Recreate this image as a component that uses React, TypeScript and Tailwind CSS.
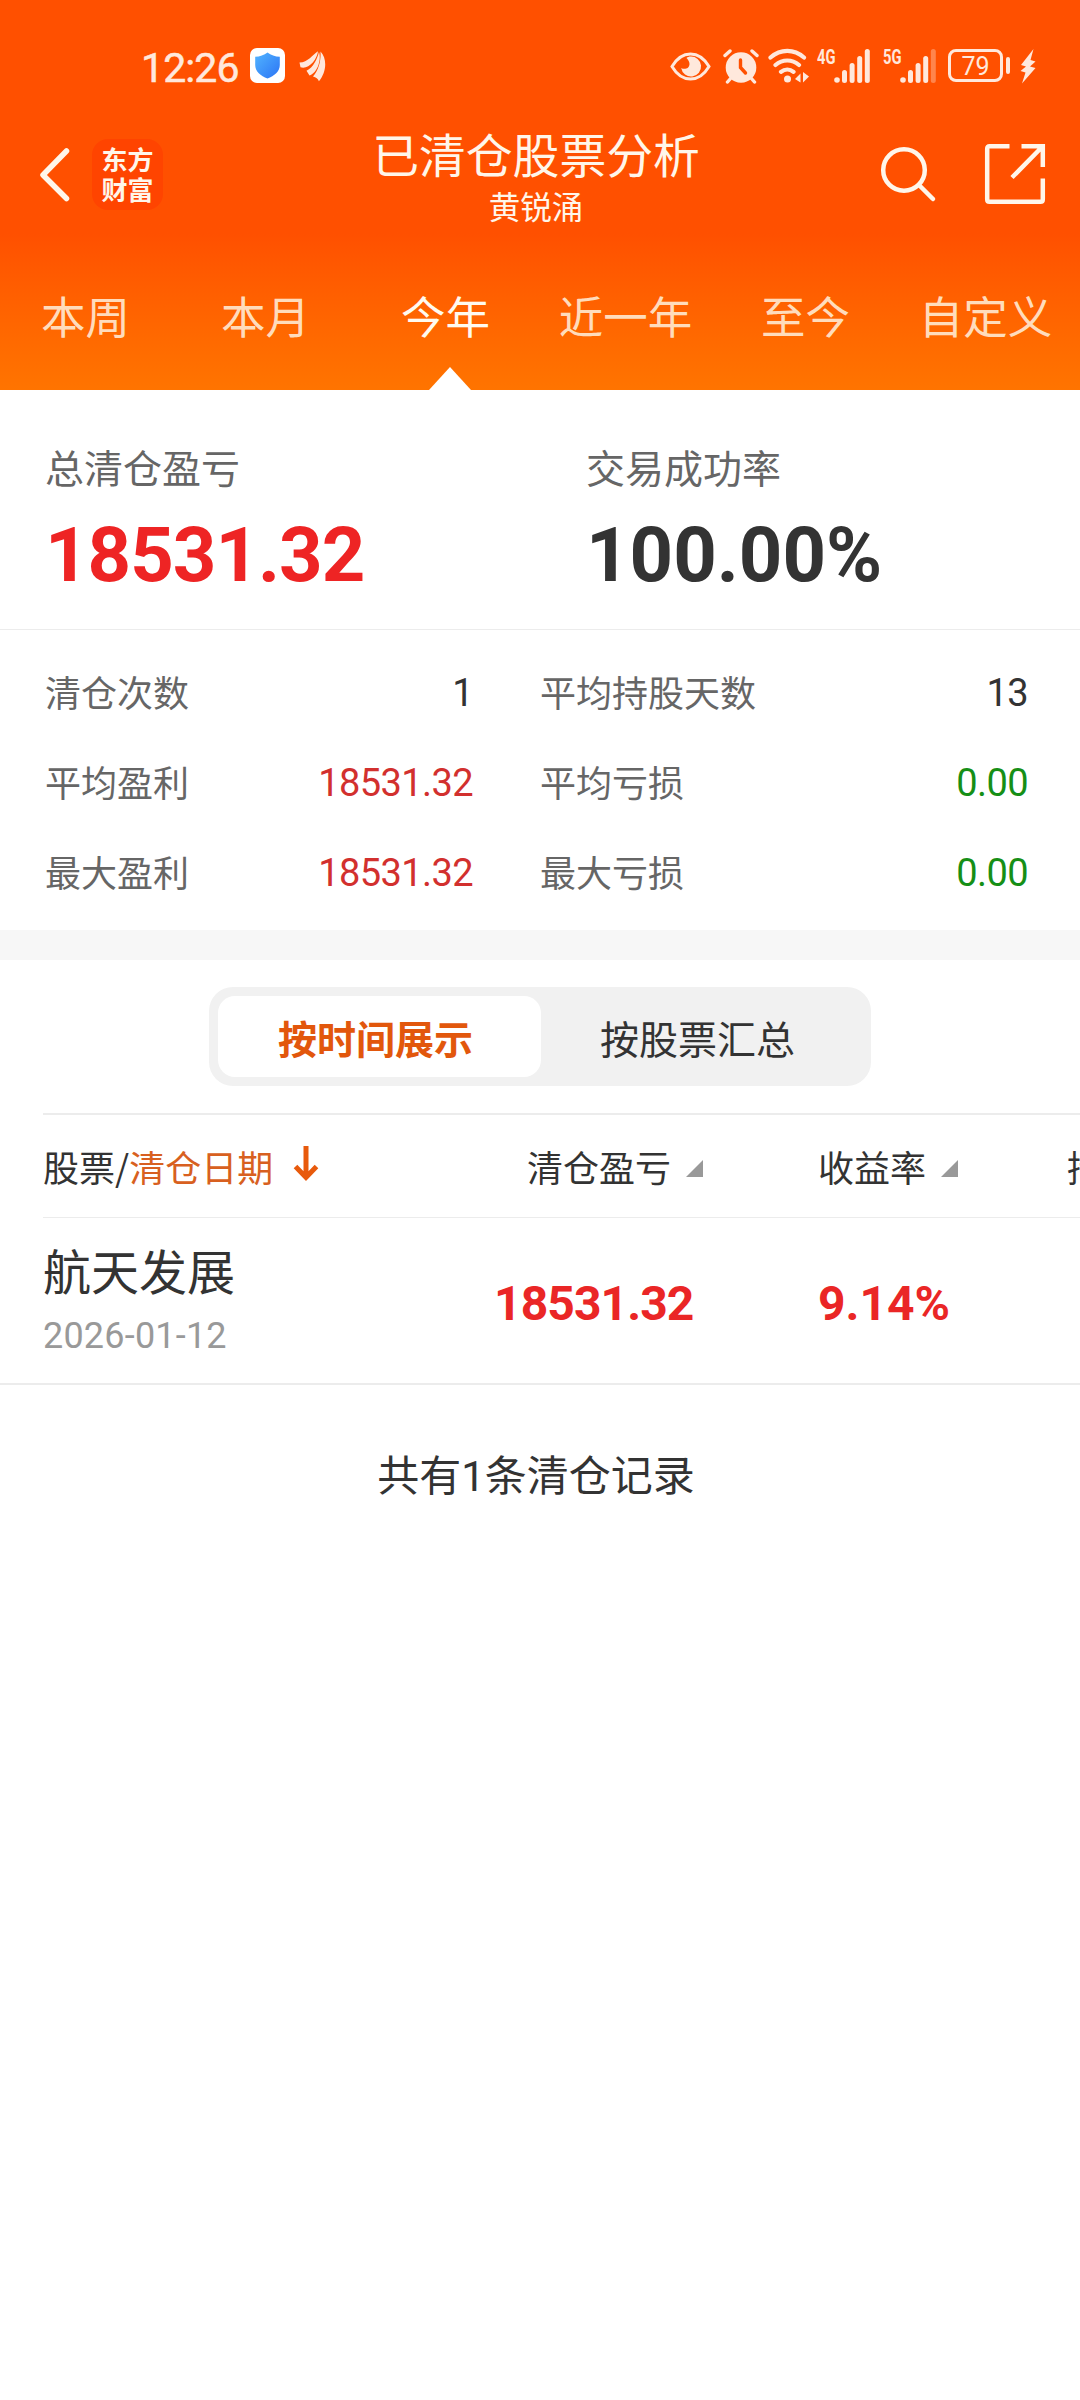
import { useState } from "react";
import clsx from "clsx";

const tabs = ["本周", "本月", "今年", "近一年", "至今", "自定义"];

const stats = [
  { label: "清仓次数", value: "1", tone: "text-[#333333]" },
  { label: "平均持股天数", value: "13", tone: "text-[#333333]" },
  { label: "平均盈利", value: "18531.32", tone: "text-[#d2302e]" },
  { label: "平均亏损", value: "0.00", tone: "text-[#168f16]" },
  { label: "最大盈利", value: "18531.32", tone: "text-[#d2302e]" },
  { label: "最大亏损", value: "0.00", tone: "text-[#168f16]" },
];

const records = [
  { name: "航天发展", date: "2026-01-12", profit: "18531.32", rate: "9.14%" },
];

function Signal({ label, weak }: { label: string; weak?: boolean }) {
  return (
    <svg className="h-9 w-[54px] overflow-visible font-[Roboto,sans-serif]" viewBox="0 0 54 36" fill="currentColor">
      <text x="1" y="15.500" fontSize="20" fontWeight="700" textLength="18.500" lengthAdjust="spacingAndGlyphs">
        {label}
      </text>
      <circle cx="21" cy="32" r="2.800" />
      <rect x="26" y="22" width="5" height="13" rx="2.500" />
      <rect x="33.600" y="15" width="5" height="20" rx="2.500" />
      <rect x="41.200" y="8" width="5" height="27" rx="2.500" />
      <rect x="48.800" y="1" width="5" height="34" rx="2.500" opacity={weak ? 0.35 : 1} />
    </svg>
  );
}

function StatusBar() {
  return (
    <div className="flex h-[124px] items-center pt-[7px] pl-[141px] text-[#ffe8dc]">
      <span className="w-[109px] pt-[5px] font-[Roboto,sans-serif] text-[41px] leading-none tracking-[-0.900px] [-webkit-text-stroke:0.500px_currentColor]">12:26</span>
      <svg className="h-[35px] w-[35px]" viewBox="0 0 35 35">
        <defs>
          <linearGradient id="shield" x1="0" y1="0" x2="1" y2="1">
            <stop offset="0" stopColor="#52b4ff" />
            <stop offset="1" stopColor="#2b74f5" />
          </linearGradient>
        </defs>
        <rect width="35" height="35" rx="7" fill="#fff" />
        <path d="M17.5 4.5c3.5 2.8 7.5 4 12.3 4.3V17c0 6.500-5.500 10.800-12.300 13.500C10.700 27.800 5.200 23.500 5.200 17V8.800c4.800-.3 8.800-1.500 12.300-4.300Z" fill="url(#shield)" />
      </svg>
      <svg className="ml-[14px] h-[32px] w-[28px]" viewBox="0 0 28 32" fill="currentColor">
        <path d="M.5 12.500C9 12.500 13.500 4.500 19 1.200 18 10 9 20 1.500 17.200Z" />
        <path d="M7.500 20.800C14.500 17.500 18 9 20 2c2.800 9-2.500 21.500-9.500 23.500Z" />
        <path d="M14 26.500C20.500 19 22 9 21.500 1.500c7 7 6 21-1.600 29.800-.8-2.500-2.900-4-5.900-4.800Z" />
      </svg>

      <svg className="ml-auto h-9 w-[41px]" viewBox="0 0 41 36" fill="none" stroke="currentColor" strokeWidth="3">
        <path d="M2 18.500C7 10 13 6 20.500 6S34 10 39 18.500C34 27 28 31 20.500 31S7 27 2 18.500Z" />
        <path d="M20.500 8.500a10 10 0 1 1-9.300 11.500c3.300 2 8.300.5 8.300-4 0-2.500-1.500-4.500-3-6 1.200-1 2.500-1.500 4-1.500Z" fill="currentColor" stroke="none" />
      </svg>
      <svg className="ml-3 h-9 w-9" viewBox="0 0 36 36" fill="none" stroke="currentColor" strokeWidth="3.400" strokeLinecap="round">
        <circle cx="18" cy="19.500" r="15.300" fill="currentColor" stroke="none" />
        <path d="M2 7.500 7 3M34 7.500 29 3M8 30l-3.500 4M28 30l3.500 4" />
        <path d="M17.500 12v7.500l5 5.500" stroke="#ff5000" />
      </svg>
      <svg className="ml-[9px] h-9 w-[41px]" viewBox="0 0 41 36" fill="none" stroke="currentColor" strokeWidth="4.200" strokeLinecap="round">
        <path d="M2.500 9.500C12.500.7 26 .7 36 9.500M7.500 17c7-6 16.500-6 23.500 0M13 23.800c3.800-3 8.800-3 12.500 0" />
        <circle cx="19.500" cy="31" r="3.500" fill="currentColor" stroke="none" />
        <path d="M27 31 32.500 25.500v9ZM41 28.500 35 34.500V24Z" fill="currentColor" stroke="none" />
      </svg>
      <div className="ml-[7px]"><Signal label="4G" /></div>
      <div className="ml-3"><Signal label="5G" weak /></div>
      <div className="ml-3 flex h-[33px] w-[55px] items-center justify-center rounded-[8px] border-[3px] border-current pt-[2px] font-[Roboto,sans-serif] text-[25px] leading-none">
        79
      </div>
      <span className="ml-[3px] h-[17px] w-[4px] rounded-full bg-current" />
      <svg className="mr-[44px] ml-[10px] h-9 w-[16px]" viewBox="0 0 16 36" fill="currentColor">
        <path d="M13.500 1 1 17l5 1.500L.5 23l5 1.500L2 35.500 15.500 20l-5.500-1.500 5.500-5-5-1.500Z" />
      </svg>
    </div>
  );
}

function NavBar() {
  return (
    <div className="flex h-[100px] items-center text-[#fff6ea]">
      <div className="flex w-[336px] items-center pl-[38px]">
        <svg className="h-[56px] w-[34px]" viewBox="0 0 34 56" fill="none" stroke="currentColor" strokeWidth="5.500" strokeLinecap="round" strokeLinejoin="round">
          <path d="M28.500 5 5 29 28.500 52.500" />
        </svg>
        <div className="ml-5 flex h-[71px] w-[71px] items-center justify-center rounded-[16px] bg-[#ff4400] text-[26px] leading-[30px] font-bold">
          <span>东方<br />财富</span>
        </div>
      </div>
      <div className="flex w-[400px] flex-col items-center pt-[5px]">
        <h1 className="text-[46.800px] leading-[56px]">已清仓股票分析</h1>
        <p className="text-[31.500px] leading-[48px]">黄锐涌</p>
      </div>
      <div className="flex flex-1 items-center justify-end pr-[34px]">
        <svg className="mr-[47px] h-[60px] w-[58px]" viewBox="0 0 58 60" fill="none" stroke="currentColor" strokeWidth="4.500" strokeLinecap="round">
          <circle cx="25" cy="26" r="20.800" />
          <path d="M40 41 54 55" />
        </svg>
        <svg className="h-[62px] w-[62px]" viewBox="0 0 62 62" fill="none" stroke="currentColor" strokeWidth="4.500">
          <path d="M25.500 3.200H5.500Q3.200 3.200 3.200 5.500V56.500Q3.200 58.800 5.500 58.800H56.500Q58.800 58.800 58.800 56.500V35.500" />
          <path d="M37.500 3.200H58.800V24M58 4 28 34.500" />
        </svg>
      </div>
    </div>
  );
}

export default function App() {
  const [tab, setTab] = useState("今年");

  return (
    <div className="h-[2400px] w-[1080px] overflow-hidden bg-white font-['Noto_Sans_CJK_SC',sans-serif] text-[#333333]">
      {/* Header */}
      <header className="flex h-[390px] flex-col bg-linear-to-b from-[#ff5000] from-60% to-[#ff7400]">
        <StatusBar />
        <NavBar />
        <nav className="grid flex-1 grid-cols-6">
          {tabs.map((t) => (
            <button
              key={t}
              onClick={() => setTab(t)}
              className={clsx(
                "flex flex-col items-center justify-between pt-[61px] text-[44.500px] leading-[60px] whitespace-nowrap",
                t === tab ? "text-[#fffaf0]" : "text-[#ffdcbc]"
              )}
            >
              <span className="pr-[9px]">{t}</span>
              {t === tab && (
                <svg className="h-[23px] w-[42px]" viewBox="0 0 42 23">
                  <path d="M21 0 42 23H0Z" fill="#fff" />
                </svg>
              )}
            </button>
          ))}
        </nav>
      </header>

      {/* Totals */}
      <section className="grid h-[239px] grid-cols-2 pt-[50px]">
        <div className="pl-[45px]">
          <p className="text-[39px] leading-[52px] text-[#666666]">总清仓盈亏</p>
          <p className="mt-[18px] font-[Roboto,sans-serif] text-[76px] leading-[90px] font-bold tracking-[-1px] text-[#ee2424]">18531.32</p>
        </div>
        <div className="pl-[46px]">
          <p className="text-[39px] leading-[52px] text-[#666666]">交易成功率</p>
          <p className="mt-[18px] font-[Roboto,sans-serif] text-[76px] leading-[90px] font-bold">100.00%</p>
        </div>
      </section>

      {/* Breakdown */}
      <section className="grid h-[301px] grid-cols-2 content-start border-t border-[#ececec] pt-[16px]">
        {stats.map((s, i) => (
          <div
            key={s.label}
            className={clsx(
              "flex h-[90px] items-center justify-between text-[36px]",
              i % 2 === 0 ? "pr-[67px] pl-[45px]" : "pr-[52px]"
            )}
          >
            <span className="text-[#666666]">{s.label}</span>
            <span className={clsx("pt-[5px] font-[Roboto,sans-serif] text-[38px] tracking-[-0.600px]", s.tone)}>{s.value}</span>
          </div>
        ))}
      </section>
      <div className="h-[30px] bg-[#f7f7f7]" />

      {/* View switch */}
      <div className="flex h-[153px] pt-[27px]">
        <div className="mx-auto flex h-[99px] w-[662px] rounded-[24px] bg-[#f1f1f1] p-[9px] text-[39px] leading-[80px]">
          <button className="w-[323px] rounded-[17px] bg-white pr-[8px] font-bold text-[#e2570c]">按时间展示</button>
          <button className="flex-1 pr-[8px]">按股票汇总</button>
        </div>
      </div>

      {/* Records */}
      <section className="border-b-2 border-[#ececec]">
        <div className="ml-[43px] flex h-[105px] items-center overflow-hidden border-t-2 border-b border-t-[#ececec] border-b-[#ececec] text-[36px] whitespace-nowrap">
          <div className="flex w-[484px] shrink-0 items-center">
            股票/<span className="text-[#d86020]">清仓日期</span>
            <svg className="mb-[4px] ml-[19px] h-[36px] w-[28px]" viewBox="0 0 28 36" fill="none" stroke="#e85a0c" strokeWidth="5">
              <path d="M14 0v30M3.500 20.500 14 31.500 24.500 20.500" />
            </svg>
          </div>
          <div className="flex w-[291px] shrink-0 items-center">
            清仓盈亏
            <svg className="mt-[4px] ml-[15px] h-[17px] w-[17px]" viewBox="0 0 17 17">
              <path d="M17 0V17H0Z" fill="#999" />
            </svg>
          </div>
          <div className="flex w-[249px] shrink-0 items-center">
            收益率
            <svg className="mt-[4px] ml-[15px] h-[17px] w-[17px]" viewBox="0 0 17 17">
              <path d="M17 0V17H0Z" fill="#999" />
            </svg>
          </div>
          <span className="shrink-0">持</span>
        </div>
        {records.map((r) => (
          <div key={r.name} className="ml-[43px] flex h-[165px] items-center">
            <div className="w-[451px] self-start pt-[18px]">
              <p className="text-[48px] leading-[66px]">{r.name}</p>
              <p className="mt-[5px] font-[Roboto,sans-serif] text-[36px] leading-[58px] tracking-[0.200px] text-[#999999]">{r.date}</p>
            </div>
            <p className="w-[324px] pt-[6px] font-[Roboto,sans-serif] text-[48px] font-bold tracking-[-0.900px] text-[#ea2626]">{r.profit}</p>
            <p className="pt-[6px] font-[Roboto,sans-serif] text-[48px] font-bold text-[#ea2626]">{r.rate}</p>
          </div>
        ))}
      </section>

      <p className="pt-[56px] pr-[8px] text-center text-[42px] leading-[64px]">
        共有<span className="font-[Roboto,sans-serif]">1</span>条清仓记录
      </p>
    </div>
  );
}
